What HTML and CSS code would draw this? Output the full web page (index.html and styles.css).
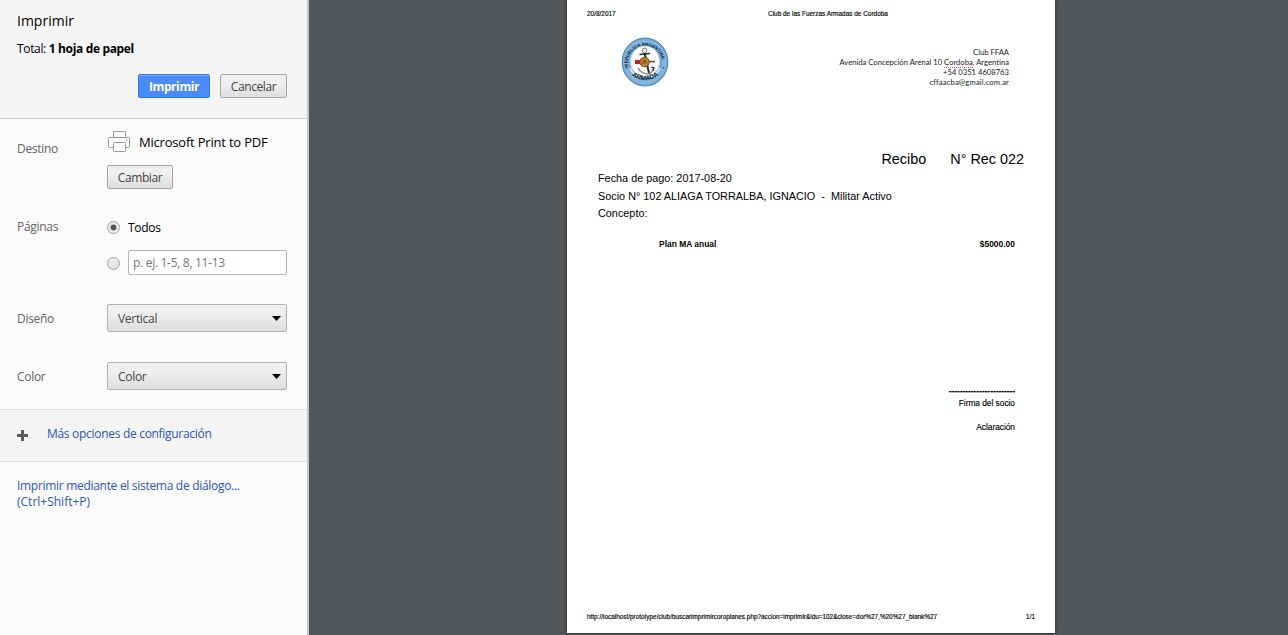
FILE: index.html
```html
<!DOCTYPE html>
<html lang="es">
<head>
<meta charset="utf-8">
<title>Imprimir</title>
<link rel="stylesheet" href="styles.css">
</head>
<body>
<aside class="sidebar">
  <header class="summary">
    <h1 class="title">Imprimir</h1>
    <p class="total">Total: <b>1 hoja de papel</b></p>
    <div class="actions">
      <button class="btn primary">Imprimir</button>
      <button class="btn cancel">Cancelar</button>
    </div>
  </header>
  <section class="options">
    <div class="row destination">
      <span class="label">Destino</span>
      <div class="control">
        <div class="printer">
          <svg width="24" height="24" viewBox="0 0 24 24" fill="#fff" stroke="#9b9b9b">
            <path d="M6.5 7.500V1.500H18.500V7.500"/>
            <path d="M18.500 17.500H21.500Q22.500 17.500 22.500 16.500V8.500Q22.500 7.500 21.500 7.500H2.500Q1.500 7.500 1.500 8.500V16.500Q1.500 17.500 2.500 17.500H6.500"/>
            <rect x="6.500" y="12.500" width="12" height="9" rx="1"/>
            <path d="M19 10h1.500" stroke-width="1.500" stroke="#aaa"/>
          </svg>
          <span class="printer-name">Microsoft Print to PDF</span>
        </div>
        <button class="btn change">Cambiar</button>
      </div>
    </div>
    <div class="row pages">
      <span class="label">Páginas</span>
      <div class="control">
        <label class="choice"><span class="radio checked"></span><span class="all">Todos</span></label>
        <label class="choice range"><span class="radio"></span><span class="field"><span class="hint">p. ej. 1-5, 8, 11-13</span></span></label>
      </div>
    </div>
    <div class="row layout">
      <span class="label">Diseño</span>
      <div class="select"><span>Vertical</span><svg width="9" height="5"><path d="M0 0H9L4.500 5Z"/></svg></div>
    </div>
    <div class="row color">
      <span class="label">Color</span>
      <div class="select"><span>Color</span><svg width="9" height="5"><path d="M0 0H9L4.500 5Z"/></svg></div>
    </div>
  </section>
  <section class="more">
    <svg width="11" height="11"><path d="M5.500 0V11M0 5.500H11" stroke="#5a5a5a" stroke-width="3"/></svg>
    <a class="link more-link">Más opciones de configuración</a>
  </section>
  <section class="system">
    <a class="link"><span class="dialog">Imprimir mediante el sistema de diálogo...</span><br><span class="shortcut">(Ctrl+Shift+P)</span></a>
  </section>
</aside>
<main class="preview">
  <article class="sheet">
    <div class="page-head"><span>20/8/2017</span><span class="doc-title">Club de las Fuerzas Armadas de Cordoba</span></div>
    <div class="letterhead">
      <svg class="seal" width="48" height="50" viewBox="0 0 48 50">
        <defs>
          <path id="top-arc" d="M7.800 32.500A17.400 17.400 0 1 1 40.200 32.500"/>
          <path id="bottom-arc" d="M8 35.500A20.500 20.500 0 0 0 40 35.500"/>
        </defs>
        <ellipse cx="24" cy="25" rx="22.900" ry="24" fill="#6ca5d2" stroke="#4c82b0" stroke-width="1"/>
        <ellipse cx="24" cy="25" rx="19.500" ry="20.500" fill="none" stroke="#86b5dc" stroke-width="4"/>
        <ellipse cx="24" cy="24.500" rx="14.500" ry="15.500" fill="#fff" stroke="#cfe0ef"/>
        <path d="M9 31Q12 39 20 40M28 40Q36 39 39 31" fill="none" stroke="#e7f1fa" stroke-width="1.500"/>
        <text class="seal-text"><textPath href="#top-arc" startOffset="3">REPUBLICA ARGENTINA</textPath></text>
        <text class="seal-text lower"><textPath href="#bottom-arc" startOffset="4" textLength="29">ARMADA</textPath></text>
        <circle cx="5.500" cy="31" r=".8" fill="#17324b"/><circle cx="42.500" cy="31" r=".8" fill="#17324b"/>
        <g fill="none" stroke="#252d36">
          <path d="M23.500 16L28 36" stroke-width="2"/>
          <circle cx="23.500" cy="13.500" r="2.400" stroke="#777"/>
          <path d="M18.500 17.500L29 16.500" stroke-width="1.700"/>
          <path d="M17 31Q20 37 28 37Q32 35 32.500 30" stroke="#8b8b83" stroke-width="1.500"/>
          <path d="M30 30l3 1-1 3" stroke-width="1.200"/>
        </g>
        <path d="M15 25L34 24.500" stroke="#743428" stroke-width="1.700"/>
        <path d="M14 23h5v4h-5z" fill="#c8202b"/>
        <circle cx="23.500" cy="25" r="4.800" fill="#bb8029" stroke="#705027"/>
        <circle cx="23.500" cy="25" r="2" fill="#8e572a"/>
      </svg>
      <address class="contact">Club FFAA<br><span class="street">Avenida Concepción Arenal 10 <span class="misspelt">Cordoba</span>, Argentina</span><br>+54 0351 4608763<br><span class="mail">cffaacba@gmail.com.ar</span></address>
    </div>
    <h2 class="receipt"><span>Recibo</span><span>N° Rec 022</span></h2>
    <div class="details">
      <p>Fecha de pago: 2017-08-20</p>
      <p class="member">Socio N° 102 ALIAGA TORRALBA, IGNACIO&nbsp; -&nbsp; Militar Activo</p>
      <p>Concepto:</p>
    </div>
    <div class="item"><span>Plan MA anual</span><span>$5000.00</span></div>
    <div class="signature">
      <span class="rule">------------------------</span>
      <span>Firma del socio</span>
      <span class="clarify">Aclaración</span>
    </div>
    <div class="page-foot"><span class="url">http://localhost/prototype/club/buscarimprimircoroplanes.php?accion=imprimir&amp;idu=102&amp;close=dor%27,%20%27_blank%27</span><span>1/1</span></div>
  </article>
</main>
</body>
</html>
```
FILE: styles.css
```css
* { box-sizing: border-box; }
body {
  margin: 0;
  height: 635px;
  display: flex;
  overflow: hidden;
  font: 12px/16px "Open Sans", "Noto Sans", sans-serif;
  color: #000;
  background: #525659;
}
h1, h2, p { margin: 0; font-weight: 400; }

/* Sidebar */
.sidebar { width: 309px; flex: none; letter-spacing: -.3px; background: #fbfbfb; border-right: 2px solid #c4c6c8; }
.summary { height: 119px; padding: 10px 20px 0 17px; background: #f5f5f5; border-bottom: 1px solid #c8c8c8; }
.title { font-size: 14px; line-height: 21px; letter-spacing: 0; }
.total { margin-top: 10px; letter-spacing: -.34px; }
.actions { display: flex; justify-content: flex-end; gap: 10px; margin-top: 17px; }
.btn {
  height: 24px;
  padding: 1px 0 0;
  font: 12px/21px "Open Sans", "Noto Sans", sans-serif;
  letter-spacing: -.4px;
  color: #444;
  border: 1px solid #a6a6a6;
  border-radius: 2px;
  background: linear-gradient(#efefef 38%, #dedede);
}
.primary { width: 72px; font-weight: 700; color: #fff; border-color: #3079ed; background: #4a8bf8; box-shadow: inset 0 1px #78a9fb; }
.cancel { width: 67px; }
.change { width: 66px; display: block; margin-top: 11px; }

.options { height: 290px; }
.row { display: flex; padding: 0 20px 0 17px; }
.label { width: 90px; flex: none; color: #646464; }
.control { flex: 1; }
.destination { padding-top: 10px; }
.destination .label { padding-top: 12px; }
.printer { display: flex; align-items: center; height: 25px; gap: 8px; }
.printer-name { font-size: 13px; letter-spacing: -.2px; }
.pages { padding-top: 29px; }
.pages .label { padding-top: 1px; }
.choice { display: flex; align-items: center; height: 18px; }
.all { padding-top: 2px; }
.range { height: 26px; margin-top: 13px; }
.radio { width: 13px; height: 13px; margin-right: 8px; flex: none; border: 1px solid #a0a0a0; border-radius: 50%; background: linear-gradient(#f1f1f1, #dedede); }
.range .radio { margin-top: 2px; }
.checked { background: radial-gradient(circle, #555 0 2.700px, #eaeaea 3.300px); }
.field { flex: 1; height: 25px; padding: 4px; color: #777; background: #fff; border: 1px solid #b5b5b5; border-radius: 2px; line-height: 16px; }
.layout { padding-top: 29px; }
.color { padding-top: 30px; }
.layout .label, .color .label { padding-top: 7px; }
.select {
  flex: 1;
  height: 28px;
  display: flex;
  align-items: center;
  justify-content: space-between;
  padding: 1px 5px 0 10px;
  color: #444;
  border: 1px solid #b3b3b3;
  border-radius: 2px;
  background: linear-gradient(#efefef 30%, #dedede);
}
.select svg { margin-top: -1px; fill: #000; }
.more { height: 53px; display: flex; gap: 19px; padding: 16px 17px 0; background: #f5f5f5; border: solid #dedede; border-width: 1px 0; }
.more svg { margin-top: 4px; }
.link { color: #2a56b8; }
.system { padding: 16px 17px 0; }
.shortcut { letter-spacing: 0; }

/* Preview */
.preview { flex: 1; padding-left: 258px; }
.sheet {
  width: 488px;
  height: 633px;
  display: flex;
  flex-direction: column;
  background: #fff;
  box-shadow: 0 0 3px 1px #36393b;
  font-family: "Liberation Sans", Arial, sans-serif;
}
.page-head { display: grid; grid-template-columns: 181px 1fr; padding: 10px 20px 0; font-size: 6.450px; line-height: 8px; height: 18px; -webkit-text-stroke: .15px #000; }
.letterhead { height: 132px; display: flex; justify-content: space-between; padding: 19px 46px 0 54px; }
.contact { margin-top: 9.700px; text-align: right; font: 7.650px/10.200px Lato, "Open Sans", sans-serif; color: #222; }
.mail { letter-spacing: .13px; }
.misspelt { border-bottom: 1px dotted #d55; }
.receipt { display: flex; justify-content: flex-end; gap: 24px; padding-right: 31px; font-size: 14.400px; line-height: 19px; }
.details { padding: 1px 31px 0; font-size: 10.850px; line-height: 17.500px; }
.item { display: flex; justify-content: space-between; padding: 16px 40px 0 92px; font-size: 8.450px; line-height: 10px; font-weight: 700; }
.signature { display: flex; flex-direction: column; align-items: flex-end; padding: 136px 40px 0 0; font-size: 8.300px; line-height: 12px; -webkit-text-stroke: .15px #000; }
.rule { font-weight: 700; }
.clarify { margin-top: 12px; }
.page-foot { display: flex; justify-content: space-between; margin-top: auto; padding: 0 20px 12px; font-size: 6.400px; line-height: 8px; -webkit-text-stroke: .15px #000; }
.seal-text { font: 700 4.500px "Liberation Sans", Arial, sans-serif; fill: #10202f; }
.lower { font-size: 6.500px; }
```
